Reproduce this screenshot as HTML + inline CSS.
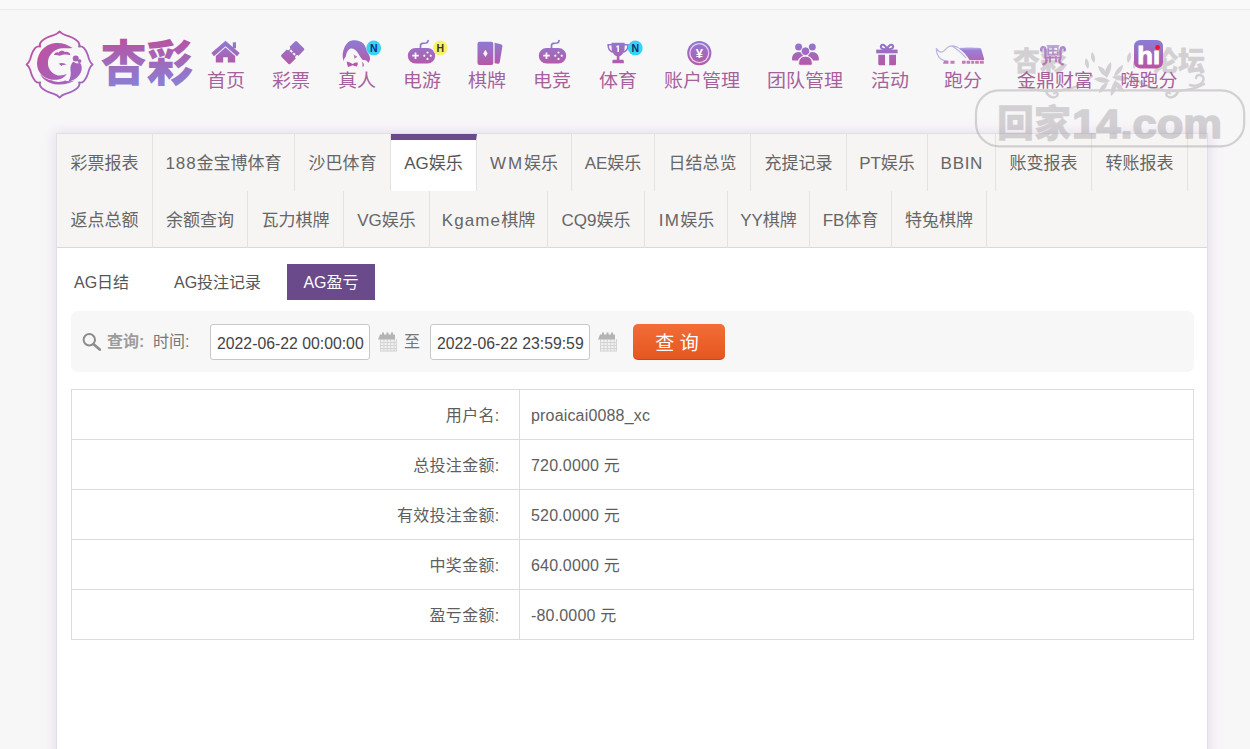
<!DOCTYPE html>
<html lang="zh-CN">
<head>
<meta charset="utf-8">
<title>AG盈亏</title>
<style>
*{box-sizing:border-box;margin:0;padding:0}
html,body{width:1250px;height:749px;overflow:hidden}
body{position:relative;background:#f8f7f8;font-family:"Liberation Sans","Noto Sans CJK SC",sans-serif;color:#555;}
.abs{position:absolute}
#topstrip{left:0;top:0;width:1250px;height:10px;background:#f9f9f9;border-bottom:1px solid #ececec}
/* nav */
.nav{position:absolute;top:0;left:0}
.ni{position:absolute;top:69px;height:24px;line-height:24px;font-size:18px;color:#a6619c;white-space:nowrap;transform:translateX(-50%) scaleX(1.055);text-align:center;margin-left:.9px}
.ico{position:absolute}
/* panel */
#panel{left:56px;top:133px;width:1152px;height:640px;background:#fff;border:1px solid #e2dfe2;box-shadow:0 1px 12px 2px rgba(170,120,200,.2)}
#tabs{left:0;top:0;width:1150px;height:114px;background:#f6f5f4;border-bottom:1px solid #d9d9d9}
.tab{position:absolute;height:57px;line-height:59px;font-size:17px;color:#666;border-right:1px solid #e4e2e1;white-space:nowrap;text-align:center;padding:0}
.tab.on{background:#fff;border-top:6px solid #6b4a8b;line-height:47px;color:#555}
/* sub */
.sub{position:absolute;top:264px;height:36px;line-height:38px;font-size:16px;color:#555;white-space:nowrap}
.sub.on{background:#6b4a8b;color:#fff;padding:0;width:88px;text-align:center}
#search{left:71px;top:311px;width:1123px;height:61px;background:#f7f7f7;border-radius:7px}
.lbl{position:absolute;font-size:16px;color:#777;white-space:nowrap;line-height:20px;margin-top:1px}
.inp{position:absolute;top:324px;width:160px;height:36px;border:1px solid #c8c8c8;border-radius:3px;background:#fff;font-size:15.8px;line-height:37px;color:#444;padding-left:6px;white-space:nowrap}
#btn{left:633px;top:324px;width:92px;height:36px;border-radius:5px;background:linear-gradient(#f26d37,#e5561f);color:#fff;font-size:19px;line-height:39px;text-align:center;padding-right:4px;box-shadow:inset 0 -1px 0 rgba(160,50,0,.35)}
/* table */
#tbl{left:71px;top:389px;width:1123px;height:251px;border:1px solid #dcdcdc;background:#fff}
.tr{position:absolute;left:0;width:1121px;height:50px;border-bottom:1px solid #dcdcdc;font-size:16px;line-height:52px;color:#5e5e5e}
.tr .k{position:absolute;left:0;width:448px;height:50px;text-align:right;padding-right:19.5px;letter-spacing:.3px;border-right:1px solid #dcdcdc}
.tr .v{position:absolute;left:459px;white-space:nowrap;letter-spacing:.17px}
</style>
</head>
<body>
<div id="topstrip" class="abs"></div>

<!-- PANEL -->
<div id="panel" class="abs">
  <div id="tabs" class="abs">
      <div class="tab" style="left:0px;top:0px;width:96px">彩票报表</div>
      <div class="tab" style="left:96px;top:0px;width:142px"><span style="letter-spacing:.9px">188</span>金宝博体育</div>
      <div class="tab" style="left:238px;top:0px;width:96px">沙巴体育</div>
      <div class="tab on" style="left:334px;top:0px;width:86px">AG娱乐</div>
      <div class="tab" style="left:420px;top:0px;width:95px"><span style="letter-spacing:1.8px">WM</span>娱乐</div>
      <div class="tab" style="left:515px;top:0px;width:83px">AE娱乐</div>
      <div class="tab" style="left:598px;top:0px;width:96px">日结总览</div>
      <div class="tab" style="left:694px;top:0px;width:96px">充提记录</div>
      <div class="tab" style="left:790px;top:0px;width:81px">PT娱乐</div>
      <div class="tab" style="left:871px;top:0px;width:68px"><span style="letter-spacing:.7px;margin-left:.7px">BBIN</span></div>
      <div class="tab" style="left:939px;top:0px;width:96px">账变报表</div>
      <div class="tab" style="left:1035px;top:0px;width:96px">转账报表</div>
      <div class="tab" style="left:0px;top:57px;width:96px">返点总额</div>
      <div class="tab" style="left:96px;top:57px;width:95px">余额查询</div>
      <div class="tab" style="left:191px;top:57px;width:96px">瓦力棋牌</div>
      <div class="tab" style="left:287px;top:57px;width:86px">VG娱乐</div>
      <div class="tab" style="left:373px;top:57px;width:118px"><span style="letter-spacing:1.1px">Kgame</span>棋牌</div>
      <div class="tab" style="left:491px;top:57px;width:97px">CQ9娱乐</div>
      <div class="tab" style="left:588px;top:57px;width:83px"><span style="letter-spacing:1.2px;margin-left:1px">IM</span>娱乐</div>
      <div class="tab" style="left:671px;top:57px;width:82px">YY棋牌</div>
      <div class="tab" style="left:753px;top:57px;width:82px">FB体育</div>
      <div class="tab" style="left:835px;top:57px;width:95px">特兔棋牌</div>
  </div>
</div>

<div class="sub" style="left:74px">AG日结</div>
<div class="sub" style="left:174px">AG投注记录</div>
<div class="sub on" style="left:287px">AG盈亏</div>

<div id="search" class="abs"></div>

<svg class="abs" style="left:71px;top:312px" width="560" height="59" viewBox="71 312 560 59">
  <circle cx="89.300" cy="339.700" r="5.700" fill="none" stroke="#8c8c8c" stroke-width="2"/>
  <path d="M93.600,344.200 L99.800,349.600" stroke="#8c8c8c" stroke-width="2.600" stroke-linecap="round"/>
  <g id="cal">
    <rect x="380" y="339" width="17" height="12.300" fill="#f1f1f1"/>
    <path d="M380,342.500h17M380,345.500h17M380,348.500h17M380.500,339v12.300M383.900,339v12.300M387.300,339v12.300M390.700,339v12.300M394.100,339v12.300M396.500,339v12.300M380,351h17" stroke="#d4d4d4" stroke-width="1" fill="none"/>
    <path d="M380,334.500 h2 v-2 h2 v2 h2.500 v-2 h2 v2 h2.500 v-2 h2 v2 h2 v5 h-17 Z" fill="#b4b4b4"/>
  </g>
  <use href="#cal" x="220" y="0"/>
</svg>
<div class="lbl" style="left:107px;top:331px;font-weight:bold;color:#9c9c9c">查询:</div>
<div class="lbl" style="left:153px;top:331px">时间:</div>
<div class="inp" style="left:210px">2022-06-22 00:00:00</div>
<div class="lbl" style="left:404px;top:331px">至</div>
<div class="inp" style="left:430px">2022-06-22 23:59:59</div>
<div id="btn" class="abs">查 询</div>

<div id="tbl" class="abs">
  <div class="tr" style="top:0"><div class="k">用户名:</div><div class="v">proaicai0088_xc</div></div>
  <div class="tr" style="top:50px"><div class="k">总投注金额:</div><div class="v">720.0000 元</div></div>
  <div class="tr" style="top:100px"><div class="k">有效投注金额:</div><div class="v">520.0000 元</div></div>
  <div class="tr" style="top:150px"><div class="k">中奖金额:</div><div class="v">640.0000 元</div></div>
  <div class="tr" style="top:200px;border-bottom:none"><div class="k">盈亏金额:</div><div class="v">-80.0000 元</div></div>
</div>



<!-- WATERMARK -->
<svg class="abs" style="left:960px;top:36px" width="290" height="120" viewBox="960 36 290 120">
 <g opacity=".34">
  <g fill="#8c868c" stroke="#8c868c" font-family="'Liberation Sans','Noto Sans CJK SC',sans-serif" font-weight="bold">
    <text x="1013" y="71" font-size="27" font-weight="900" stroke-width=".4" textLength="54" lengthAdjust="spacingAndGlyphs">杏彩</text>
    <text x="1151" y="71" font-size="27" font-weight="900" stroke-width=".4" textLength="54" lengthAdjust="spacingAndGlyphs">论坛</text>
    <text x="997" y="137" font-size="37" font-weight="900" stroke-width=".5" textLength="74" lengthAdjust="spacingAndGlyphs">回家</text>
    <text x="1072" y="138" font-size="41" stroke-width="1.600" stroke-linejoin="round" textLength="150" lengthAdjust="spacingAndGlyphs">14.com</text>
  </g>
  <rect x="976" y="90.300" width="268.200" height="56" rx="23" fill="none" stroke="#8c868c" stroke-width="2.200"/>
  <g fill="none" stroke="#8c868c" stroke-width="2.400" stroke-linecap="round">
    <path d="M1022,85 C1035,92 1055,92.500 1070,88.500 C1078,86.500 1086,82 1092,76"/>
    <path d="M1046,91.500 C1048,97 1054,99 1057,96 C1059,93 1056,91.500 1054,93.500"/>
    <path d="M1204,84 C1190,92 1170,92.500 1155,88.500 C1146,86.500 1138,82 1132,76"/>
    <path d="M1178,91.500 C1176,97 1170,99 1167,96 C1165,93 1168,91.500 1170,93.500"/>
    <path d="M1190,85 C1196,87 1203.500,84 1203.500,79 C1203.500,74.500 1197,73.500 1196,78"/>
  </g>
  <g fill="#8c868c">
    <path d="M1111,62 C1106,66 1104,72 1106,78 C1110,74 1112,68 1111,62 Z"/>
    <path d="M1111,96 C1116,92 1118,86 1116,80 C1112,84 1110,90 1111,96 Z"/>
    <path d="M1094,79 C1099,83 1105,84 1110,81 C1106,77 1099,76 1094,79 Z"/>
    <path d="M1128,79 C1123,75 1117,74 1112,77 C1116,81 1123,82 1128,79 Z"/>
    <path d="M1098,66 C1099,72 1103,76 1108,77 C1107,71 1103,67 1098,66 Z"/>
    <path d="M1124,92 C1123,86 1119,82 1114,81 C1115,87 1119,91 1124,92 Z"/>
    <path d="M1123,65 C1118,67 1115,71 1114,76 C1119,75 1123,70 1123,65 Z"/>
    <path d="M1099,93 C1104,91 1107,87 1108,82 C1103,83 1099,88 1099,93 Z"/>
    <path d="M1086,58 C1084,62 1085,66 1088,69 C1090,65 1089,61 1086,58 Z"/>
    <path d="M1092,52 C1090,56 1091,60 1094,63 C1096,59 1095,55 1092,52 Z"/>
    <path d="M1136,58 C1138,62 1137,66 1134,69 C1132,65 1133,61 1136,58 Z"/>
    <path d="M1130,52 C1132,56 1131,60 1128,63 C1126,59 1127,55 1130,52 Z"/>
  </g>
 </g>
</svg>

<!-- LOGO + ICONS -->
<svg class="abs" style="left:0;top:0" width="1250" height="130" viewBox="0 0 1250 130">
  <defs>
    <linearGradient id="gi" gradientUnits="userSpaceOnUse" x1="0" y1="40" x2="0" y2="66">
      <stop offset="0" stop-color="#8a7dd6"/><stop offset="1" stop-color="#b956a4"/>
    </linearGradient>
    <linearGradient id="gtk" gradientUnits="userSpaceOnUse" x1="8.9" y1="-8.9" x2="-9.5" y2="9.5">
      <stop offset="0" stop-color="#8a7dd6"/><stop offset="1" stop-color="#b956a4"/>
    </linearGradient>
    <linearGradient id="grh" gradientUnits="userSpaceOnUse" x1="0" y1="46" x2="0" y2="61">
      <stop offset="0" stop-color="#9f94e0" stop-opacity=".55"/><stop offset=".3" stop-color="#9a7fd6"/><stop offset="1" stop-color="#b465b8"/>
    </linearGradient>
    <linearGradient id="gl" gradientUnits="userSpaceOnUse" x1="30" y1="35" x2="90" y2="95">
      <stop offset="0" stop-color="#c04f9f"/><stop offset="1" stop-color="#9a6cc8"/>
    </linearGradient>
    <linearGradient id="gl2" gradientUnits="userSpaceOnUse" x1="150" y1="180" x2="600" y2="580">
      <stop offset="0" stop-color="#c04f9f"/><stop offset="1" stop-color="#9a6cc8"/>
    </linearGradient>
    <linearGradient id="gt" gradientUnits="userSpaceOnUse" x1="0" y1="38" x2="0" y2="86">
      <stop offset="0" stop-color="#b852a0"/><stop offset="1" stop-color="#8a80d6"/>
    </linearGradient>
  </defs>

  <!-- emblem -->
  <path d="M59.60,31.40 C60.97,33.13 62.77,34.37 65.43,35.17 C70.05,36.43 74.89,38.69 77.82,41.43 C79.53,43.43 79.76,45.36 79.06,46.66 C80.39,46.05 82.19,46.31 83.89,47.94 C86.23,50.69 88.04,55.11 89.04,59.28 C89.73,61.33 90.87,63.13 92.60,64.50 C90.87,65.87 89.73,67.67 89.04,69.72 C88.04,73.89 86.23,78.31 83.89,81.06 C82.19,82.69 80.39,82.95 79.06,82.34 C79.76,83.64 79.53,85.57 77.82,87.57 C74.89,90.31 70.05,92.57 65.43,93.83 C62.77,94.63 60.97,95.87 59.60,97.60 C58.23,95.87 56.43,94.63 53.77,93.83 C49.15,92.57 44.31,90.31 41.38,87.57 C39.67,85.57 39.44,83.64 40.14,82.34 C38.81,82.95 37.01,82.69 35.31,81.06 C32.97,78.31 31.16,73.89 30.16,69.72 C29.47,67.67 28.33,65.87 26.60,64.50 C28.33,63.13 29.47,61.33 30.16,59.28 C31.16,55.11 32.97,50.69 35.31,47.94 C37.01,46.31 38.81,46.05 40.14,46.66 C39.44,45.36 39.67,43.43 41.38,41.43 C44.31,38.69 49.15,36.43 53.77,35.17 C56.43,34.37 58.23,33.13 59.60,31.40 Z" fill="none" stroke="url(#gl)" stroke-width="1.8" stroke-linejoin="round"/>
  <g transform="translate(20,24) scale(0.10681)" fill="url(#gl2)">
    <path d="M492,224 C445,190 385,172 330,178 C235,188 165,265 160,360 C157,420 183,468 232,498 C282,528 345,530 395,508 C415,498 430,484 437,466 C410,482 370,488 335,474 C285,452 258,405 262,355 C266,290 320,235 390,228 C425,225 460,232 492,224 Z"/>
    <path d="M318,292 C322,268 345,258 362,268 C372,248 405,244 420,262 C445,255 470,268 472,292 C440,280 400,284 372,298 C352,290 332,288 318,292 Z"/>
    <path d="M362,372 C388,358 420,364 438,386 C420,380 400,382 388,393 C380,386 371,378 362,372 Z"/>
    <circle cx="522" cy="322" r="28"/><circle cx="557" cy="347" r="18"/>
    <path d="M498,350 C478,375 468,400 473,430 C478,468 476,500 452,538 C500,532 546,502 568,456 C585,420 581,386 561,362 C545,373 519,368 498,350 Z"/>
    <path d="M186,468 C212,520 278,562 350,567 C420,570 482,552 522,522 C492,537 452,543 421,530 C386,548 332,548 301,530 C256,522 214,500 186,468 Z"/>
  </g>
  <!-- logo text -->
  <text x="100.500" y="80.500" font-family="'Liberation Sans','Noto Sans CJK SC',sans-serif" font-weight="900" font-size="49" fill="url(#gt)" textLength="92.500" lengthAdjust="spacingAndGlyphs">杏彩</text>

  <g fill="url(#gi)">
  <!-- home -->
  <path d="M225.500,40.800 L239.700,53 L237,56.200 L225.500,46.200 L214,56.200 L211.300,53 Z"/>
  <rect x="232.800" y="42.300" width="3.200" height="6"/>
  <path d="M215.800,56 L225.500,47.600 L235.200,56 L235.200,62.400 L227.800,62.400 L227.800,57.200 L223.200,57.200 L223.200,62.400 L215.800,62.400 Z"/>
  <!-- ticket -->
  <g transform="translate(292.700,52.600) rotate(-45)">
    <path fill="url(#gtk)" fill-rule="evenodd" d="M-9.500,-6.300 L-2,-6.300 A2,2 0 0 0 2,-6.300 L9.500,-6.300 Q11,-6.300 11,-4.800 L11,4.800 Q11,6.300 9.500,6.300 L2,6.300 A2,2 0 0 0 -2,6.300 L-9.500,6.300 Q-11,6.300 -11,4.800 L-11,-4.800 Q-11,-6.300 -9.500,-6.300 Z M-1,-3.400 L-1,-0.700 L1,-0.700 L1,-3.400 Z M-1,0.700 L-1,3.400 L1,3.400 L1,0.700 Z"/>
  </g>
  <!-- woman -->
  <path d="M349,41.600 C353,39.200 360,39.800 363.600,43.800 C366.200,46.800 366,50.500 368.200,53.600 C370.600,56.800 370.800,60.200 368.200,63 C367.500,61 365.600,59.600 363,60.200 C360.600,58.400 359.600,55.400 357.800,52.800 C356,50 352.800,47.800 350,48.800 C347.600,50.200 346.400,53 345.800,56.400 C344.400,58 343.600,59.800 343.800,61.400 C342,57 342.400,52 344.400,47.600 C345.500,45.200 347,43 349,41.600 Z"/>
  <path d="M361.500,61.500 C363.500,62.500 364.500,64.200 364,66.300 L362.200,66.800 C362.700,64.800 362.400,63 361.500,61.500 Z M353.300,53.500 C354.300,55.200 355.800,56.200 357.300,56.300 C356.500,57.800 355.300,58.600 354,58.500 C354.400,57 354,55.200 353.300,53.500 Z" opacity=".8"/>
  <path d="M346.800,61.400 C348.800,61.800 351,62.800 352.600,63.900 C354.200,63 356,62.500 357.800,62.600 C357.900,64 357.600,65.400 357,66.600 C355.400,66.200 353.800,65.700 352.600,65.300 C351.200,66 349.600,66.700 348,67 C347.300,65.200 346.800,63.300 346.800,61.400 Z" fill="#bb55a8"/>
  <!-- gamepad 1 -->
  <path fill-rule="evenodd" d="M415.500,48 L427.500,48 A7.700,7.700 0 0 1 427.500,63.400 L415.500,63.400 A7.700,7.700 0 0 1 415.500,48 Z M414.600,52.400 L414.600,54.800 L412.200,54.800 L412.200,56.600 L414.600,56.600 L414.600,59 L416.400,59 L416.400,56.600 L418.800,56.600 L418.800,54.800 L416.400,54.800 L416.400,52.400 Z M427.500,51.400 a1.100,1.100 0 1 0 0.010,0 Z M427.500,57.800 a1.100,1.100 0 1 0 0.010,0 Z M424.300,54.600 a1.100,1.100 0 1 0 0.010,0 Z M430.700,54.600 a1.100,1.100 0 1 0 0.010,0 Z"/>
  <path d="M420.500,48.500 L420.500,45.500 Q420.500,43.500 422.500,43.300 L426,43 Q427.500,42.800 427.800,41.500 L428.300,40" fill="none" stroke="url(#gi)" stroke-width="1.700"/>
  <!-- cards -->
  <path d="M494.600,42.800 L500.900,44.300 Q502.700,44.800 502.400,46.600 L499.700,62.400 Q499.300,64.200 497.500,63.800 L494.600,63.200 Z"/>
  <path fill-rule="evenodd" d="M479.500,41.800 L491.300,41.800 Q493.300,41.800 493.300,43.800 L493.300,63 Q493.300,65 491.300,65 L479.500,65 Q477.500,65 477.500,63 L477.500,43.800 Q477.500,41.800 479.500,41.800 Z M485.400,49.800 L487.600,53.400 L485.400,57 L483.200,53.400 Z"/>
  <!-- gamepad 2 -->
  <path fill-rule="evenodd" d="M546.500,48 L558.500,48 A7.700,7.700 0 0 1 558.500,63.400 L546.500,63.400 A7.700,7.700 0 0 1 546.500,48 Z M545.600,52.400 L545.600,54.800 L543.200,54.800 L543.200,56.600 L545.600,56.600 L545.600,59 L547.400,59 L547.400,56.600 L549.800,56.600 L549.800,54.800 L547.400,54.800 L547.400,52.400 Z M558.500,51.400 a1.100,1.100 0 1 0 0.010,0 Z M558.500,57.800 a1.100,1.100 0 1 0 0.010,0 Z M555.300,54.600 a1.100,1.100 0 1 0 0.010,0 Z M561.700,54.600 a1.100,1.100 0 1 0 0.010,0 Z"/>
  <path d="M551.500,48.500 L551.500,45.500 Q551.500,43.500 553.500,43.300 L557,43 Q558.500,42.800 558.800,41.500 L559.300,40" fill="none" stroke="url(#gi)" stroke-width="1.700"/>
  <!-- trophy -->
  <path fill-rule="evenodd" d="M611.500,42.800 L624.700,42.800 L624.700,44 L628.800,44 C629,49 627,52 623.300,52.800 C622.300,54.600 621,55.800 619.400,56.300 L619.400,59.800 L622.600,59.800 Q623.800,59.800 623.800,61 L623.800,63.200 L612.400,63.200 L612.400,61 Q612.400,59.800 613.600,59.800 L616.800,59.800 L616.800,56.300 C615.200,55.800 613.900,54.600 612.900,52.800 C609.200,52 607.200,49 607.400,44 L611.500,44 Z M609,45.600 C609.100,48.400 610,50.200 611.900,50.900 C611.600,49.400 611.500,47.600 611.500,45.600 Z M627.200,45.600 L624.700,45.600 C624.700,47.600 624.600,49.400 624.300,50.900 C626.200,50.200 627.100,48.400 627.200,45.600 Z M617.300,45.600 L616.200,46.500 L616.200,47.600 L617.400,47.100 L617.400,52 L619,52 L619,45.600 Z"/>
  <!-- coin -->
  <circle cx="699.300" cy="53.100" r="12.100"/>
  <circle cx="699.300" cy="53.100" r="10.100" fill="#e9cdf3"/>
  <circle cx="699.300" cy="53.100" r="8.800"/>
  <!-- team -->
  <circle cx="798.600" cy="47" r="3.500"/><circle cx="812.300" cy="47" r="3.500"/>
  <path d="M792,59.500 C792,54.800 794.600,52 798.600,52 C799.600,52 800.500,52.200 801.300,52.600 C801.600,54 802.300,55.200 803.300,56 C800.600,56.800 798.800,58.400 797.800,60.600 L793.100,60.600 Q792,60.600 792,59.500 Z"/>
  <path d="M818.900,59.500 C818.900,54.800 816.300,52 812.300,52 C811.300,52 810.400,52.200 809.600,52.600 C809.300,54 808.600,55.200 807.600,56 C810.300,56.800 812.100,58.400 813.100,60.600 L817.800,60.600 Q818.900,60.600 818.900,59.500 Z"/>
  <circle cx="805.450" cy="51.200" r="4.300" stroke="#f8f7f8" stroke-width=".9"/>
  <path stroke="#f8f7f8" stroke-width=".9" d="M798.600,63.800 C798.600,59 801.200,56.200 805.450,56.200 C809.700,56.200 812.300,59 812.300,63.800 Q812.300,65.300 810.800,65.300 L800.100,65.300 Q798.600,65.300 798.600,63.800 Z"/>
  <!-- gift -->
  <path d="M878.300,54.800 L885,54.800 L885,65.300 L879.500,65.300 Q878.300,65.300 878.300,64.100 Z M889.200,54.800 L896,54.800 L896,64.100 Q896,65.300 894.800,65.300 L889.200,65.300 Z"/>
  <path d="M876.200,49.600 L897.600,49.600 L897.600,53.300 L876.200,53.300 Z"/>
  <path d="M887,49.500 C884.200,49.500 880.800,48.600 880.800,46.600 C880.800,45 882.400,44.400 883.800,45 C885.400,45.800 886.500,47.600 887,49.500 C887.500,47.600 888.600,45.800 890.200,45 C891.600,44.400 893.200,45 893.200,46.600 C893.200,48.600 889.800,49.500 887,49.500 Z" fill="none" stroke="url(#gi)" stroke-width="2"/>
  <!-- rhino -->
  <path d="M958.500,48.200 C965,47.300 974,47.400 981,48.200 L984,58.600 L984,60 L969.500,60 C967,55.500 963,51 958.500,48.200 Z" fill="url(#grh)"/>
  <path d="M944,60.800 h4.500 v2.900 h-5.500 Z M950.500,60.800 h4 v2.900 h-4 Z M962,60.800 h3.600 v2.900 h-3.600 Z M966.600,60.800 h3.600 v2.900 h-3.600 Z M971.200,60.800 h3 v2.900 h-3 Z M975.200,60.800 h3.600 v2.900 h-3.600 Z M979.800,60.800 h4 v2.900 h-4 Z" fill="#b85aa8" opacity=".8"/>
  <path d="M936.300,48.300 C936.200,52 937.500,56 940.500,58.800 C942.500,60.500 945,61.200 947.500,61 M936.500,48.600 C938,51 940,52.300 942,52 C944.500,51.500 945.500,48.500 948.500,46.800 C951.500,45.200 955,45.600 958.500,47.800 M952,46 C956,48.500 962,53 966,58" fill="none" stroke="#9a8fd4" stroke-width="1.200" opacity=".65"/>
  <!-- ding -->
  <g opacity=".78">
    <path fill-rule="evenodd" d="M1046.600,45.100 L1059.400,45.100 L1059.400,46.600 L1058.600,46.600 L1058.600,55.400 L1047.400,55.400 L1047.400,46.600 L1046.600,46.600 Z M1049,48 L1049,50 L1052.200,50 L1052.200,48 Z M1053.800,48 L1053.800,50 L1057,50 L1057,48 Z M1049,51.600 L1049,53.800 L1052.200,53.800 L1052.200,51.600 Z M1053.800,51.600 L1053.800,53.800 L1057,53.800 L1057,51.600 Z" opacity=".8"/>
    <path d="M1041.300,50.300 C1040.200,47 1044.800,45.800 1045.400,49.500 C1046,53.500 1044.600,56.500 1046.200,59.300 C1047.400,61.500 1045.500,63.600 1043.300,64.400 M1064.700,50.300 C1065.800,47 1061.200,45.800 1060.600,49.500 C1060,53.500 1061.400,56.500 1059.800,59.300 C1058.600,61.500 1060.500,63.600 1062.700,64.400" fill="none" stroke="url(#gi)" stroke-width="2.400" stroke-linecap="round"/>
    <path d="M1050,56 L1050,62.500 M1056,56 L1056,62.500 M1046.500,57.600 L1059.500,57.600" fill="none" stroke="url(#gi)" stroke-width="1.800"/>
  </g>
  <!-- hi -->
  <rect x="1134" y="40" width="29" height="28.400" rx="6.200"/>
  </g>
  <text x="699.300" y="57.600" text-anchor="middle" font-family="'Liberation Sans',sans-serif" font-weight="bold" font-size="13" fill="#fff">¥</text>
  <text x="1137.300" y="63.700" font-family="'Liberation Sans',sans-serif" font-weight="bold" font-size="24.600" fill="#fff" stroke="#fff" stroke-width=".9" textLength="22.800" lengthAdjust="spacingAndGlyphs">hi</text>
  <rect x="1153.600" y="43.600" width="6" height="6.300" fill="url(#gi)"/>
  <circle cx="1157.600" cy="47.500" r="2.400" fill="#f0142c"/>
  <!-- badges -->
  <circle cx="373.700" cy="47.900" r="7.400" fill="#35d3f6"/>
  <text x="373.700" y="51.700" text-anchor="middle" font-family="'Liberation Sans',sans-serif" font-weight="bold" font-size="10.500" fill="#1a2a6c">N</text>
  <circle cx="440.200" cy="47.900" r="7.400" fill="#f9f16a"/>
  <text x="440.200" y="51.700" text-anchor="middle" font-family="'Liberation Sans',sans-serif" font-weight="bold" font-size="10.500" fill="#3a3a20">H</text>
  <circle cx="635.300" cy="47.900" r="7.400" fill="#35d3f6"/>
  <text x="635.300" y="51.700" text-anchor="middle" font-family="'Liberation Sans',sans-serif" font-weight="bold" font-size="10.500" fill="#1a2a6c">N</text>
</svg>

<!-- NAV -->
<div class="nav" id="nav">
  <div class="ni" style="left:225px">首页</div>
  <div class="ni" style="left:290px">彩票</div>
  <div class="ni" style="left:356px">真人</div>
  <div class="ni" style="left:421px">电游</div>
  <div class="ni" style="left:486px">棋牌</div>
  <div class="ni" style="left:551px">电竞</div>
  <div class="ni" style="left:617px">体育</div>
  <div class="ni" style="left:701px">账户管理</div>
  <div class="ni" style="left:804.5px">团队管理</div>
  <div class="ni" style="left:889px">活动</div>
  <div class="ni" style="left:962px">跑分</div>
  <div class="ni" style="left:1054px">金鼎财富</div>
  <div class="ni" style="left:1148px">嗨跑分</div>
</div>


</body>
</html>
